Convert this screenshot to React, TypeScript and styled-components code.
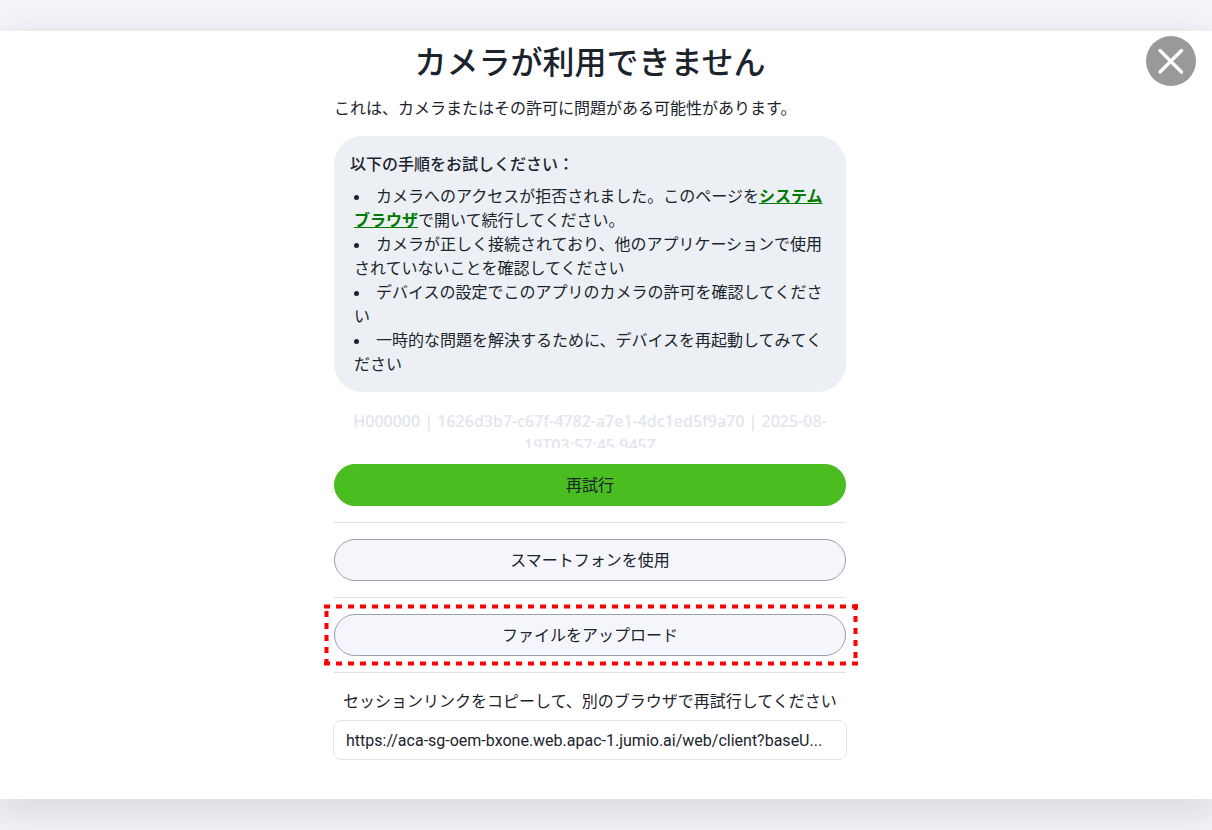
import React from 'react';
import styled, { createGlobalStyle } from 'styled-components';

const GlobalStyle = createGlobalStyle`
  *, *::before, *::after { box-sizing: border-box; }
  body {
    margin: 0;
    background: #f4f6fb;
    color: #1b232c;
    font-family: 'Noto Sans CJK JP', sans-serif;
    font-size: 16px;
    line-height: 24px;
  }
  button, input { font: inherit; color: inherit; }
`;

const Page = styled.div`
  min-height: 100vh;
  padding: 31px 0;
  overflow: hidden;
`;

const Dialog = styled.main`
  position: relative;
  display: flex;
  justify-content: center;
  min-height: calc(100vh - 62px);
  padding: 10px 32px 39px 0;
  background: #fff;
  box-shadow: 0 12px 36px 8px rgba(0, 0, 0, 0.1);
`;

const CloseButton = styled.button`
  position: absolute;
  top: 5px;
  right: 16px;
  width: 50px;
  height: 50px;
  padding: 0;
  border: 0;
  border-radius: 50%;
  background: #999;
  color: #fff;
  cursor: pointer;

  svg { display: block; }
`;

const Column = styled.div`
  display: flex;
  flex-direction: column;
  width: 100%;
  max-width: 512px;
`;

const Title = styled.h1`
  margin: 0;
  font-size: 32px;
  font-weight: 500;
  line-height: 38px;
  text-align: center;
`;

const Lead = styled.p`
  margin: 16px 0 17px;
`;

const Steps = styled.section`
  padding: 15px 16px 16px;
  border-radius: 28px;
  background: #ecf0f5;
`;

const StepsTitle = styled.h2`
  margin: 0;
  font-size: 16px;
  font-weight: 500;
  line-height: 24px;
`;

const StepList = styled.ul`
  margin: 9px 0 0;
  padding: 0 4px;
  font-family: Inter, 'Noto Sans CJK JP', sans-serif;
  list-style: disc inside;
`;

const BrowserLink = styled.a`
  color: #007a00;
  font-weight: 700;
  text-decoration: underline;
`;

const ErrorCode = styled.p`
  height: 39px;
  margin: 17px 0 16px;
  overflow: hidden;
  color: #e1e5ed;
  font-family: 'Noto Sans', 'Noto Sans CJK JP', sans-serif;
  font-weight: 500;
  text-align: center;
`;

const ActionButton = styled.button<{ $primary?: boolean }>`
  width: 100%;
  height: 42px;
  padding: 0 16px 2px;
  border: 1px solid ${(p) => (p.$primary ? '#4abd21' : '#97a1af')};
  border-radius: 21px;
  background: ${(p) => (p.$primary ? '#4abd21' : '#f4f6fb')};
  cursor: pointer;
`;

const Divider = styled.hr`
  width: 100%;
  margin: 16px 0;
  border: 0;
  border-top: 1px solid #dce2ea;
`;

const Highlighted = styled.div`
  position: relative;
`;

const Marker = styled.svg`
  position: absolute;
  top: -10px;
  left: -10px;
  width: calc(100% + 22px);
  height: 62px;
  pointer-events: none;
`;

const LinkLabel = styled.label`
  margin-bottom: 9px;
  line-height: 22px;
  text-align: center;
`;

const LinkField = styled.input`
  height: 40px;
  margin: 0 -1px;
  padding: 0 12px;
  border: 1px solid #e3e5e8;
  border-radius: 8px;
  background: #fff;
  font-family: Roboto, 'Noto Sans CJK JP', sans-serif;
  text-overflow: ellipsis;
`;

export default function App() {
  return (
    <>
      <GlobalStyle />
      <Page>
        <Dialog>
          <Column>
            <Title>カメラが利用できません</Title>
            <Lead>これは、カメラまたはその許可に問題がある可能性があります。</Lead>
            <Steps>
              <StepsTitle>以下の手順をお試しください：</StepsTitle>
              <StepList>
                <li>カメラへのアクセスが拒否されました。このページを<BrowserLink href="#browser">システムブラウザ</BrowserLink>で開いて続行してください。</li>
                <li>カメラが正しく接続されており、他のアプリケーションで使用されていないことを確認してください</li>
                <li>デバイスの設定でこのアプリのカメラの許可を確認してください</li>
                <li>一時的な問題を解決するために、デバイスを再起動してみてください</li>
              </StepList>
            </Steps>
            <ErrorCode>
              H000000 | 1626d3b7-c67f-4782-a7e1-4dc1ed5f9a70 | 2025-08-
              <br />
              19T03:57:45.945Z
            </ErrorCode>
            <ActionButton type="button" $primary>再試行</ActionButton>
            <Divider />
            <ActionButton type="button">スマートフォンを使用</ActionButton>
            <Divider />
            <Highlighted>
              <ActionButton type="button">ファイルをアップロード</ActionButton>
              <Marker aria-hidden="true" stroke="#f00" strokeWidth="4" strokeDasharray="6 6">
                <line x1="0" y1="2.5" x2="100%" y2="2.5" />
                <line x1="0" y1="59.5" x2="100%" y2="59.5" />
                <line x1="2.5" y1="7" x2="2.5" y2="61" />
                <svg x="100%" overflow="visible">
                  <line x1="-2.5" y1="0" x2="-2.5" y2="61" />
                </svg>
              </Marker>
            </Highlighted>
            <Divider />
            <LinkLabel htmlFor="session-link">セッションリンクをコピーして、別のブラウザで再試行してください</LinkLabel>
            <LinkField
              id="session-link"
              readOnly
              value="https://aca-sg-oem-bxone.web.apac-1.jumio.ai/web/client?baseU..."
            />
          </Column>
          <CloseButton type="button" aria-label="閉じる">
            <svg width="50" height="50" viewBox="0 0 50 50" fill="none" stroke="currentColor" strokeWidth="3.4" strokeLinecap="round">
              <path d="M14 14.5L35.5 36M35.5 14.5L14 36" />
            </svg>
          </CloseButton>
        </Dialog>
      </Page>
    </>
  );
}
